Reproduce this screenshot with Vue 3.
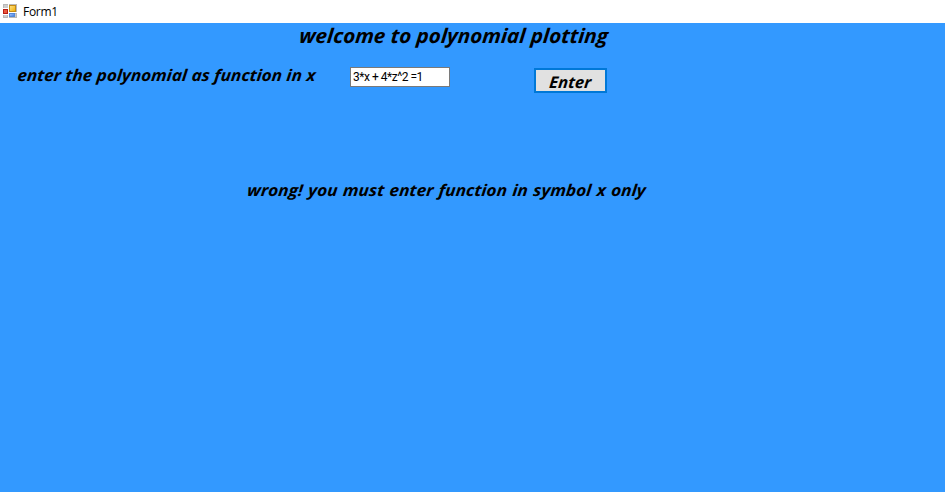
<script setup>
import { ref } from 'vue'

const expression = ref('3*x + 4*z^2 =1')
</script>

<template>
  <main class="window">
    <header class="titlebar">
      <svg class="app-icon" width="14" height="14" viewBox="0 0 14 14" aria-hidden="true">
        <defs>
          <linearGradient id="gold" x2="1" y2="1"><stop stop-color="#ffe58c" /><stop offset="1" stop-color="#f0ad00" /></linearGradient>
          <linearGradient id="blue" x2="1" y2="1"><stop stop-color="#a9ccff" /><stop offset="1" stop-color="#3c75dc" /></linearGradient>
        </defs>
        <path d="M0 0h14v14H0z" fill="#b8b8b8" />
        <path d="M1 1h4v3H1zM1 11h3v2H1zM12 10h1v3h-1z" fill="#cccccc" />
        <path d="M5 0h1v14H5zM0 4h5v1H0zM0 10h5v1H0zM5 8h9v1H5z" fill="#fff" />
        <rect x="6.5" y="1.5" width="6" height="6" fill="url(#gold)" stroke="#c58b13" />
        <rect x="0.5" y="5.5" width="4" height="4" fill="#e9573d" stroke="#b91c13" />
        <rect x="6.5" y="9.5" width="5" height="3" fill="url(#blue)" stroke="#5288d8" />
      </svg>
      <span class="caption">Form1</span>
    </header>
    <section class="form">
      <h1 class="welcome">welcome to polynomial plotting</h1>
      <div class="entry">
        <label class="prompt" for="polynomial"><span class="prompt-text">enter the polynomial as function in x</span></label>
        <input id="polynomial" v-model="expression" class="field" type="text" spellcheck="false" />
        <button class="enter" type="button"><span class="enter-text">Enter</span></button>
      </div>
      <p class="message">wrong! you must enter function in symbol x only</p>
    </section>
  </main>
</template>

<style>
body { margin: 0; overflow: hidden; }
</style>

<style scoped>
.window {
  display: flex;
  flex-direction: column;
  width: 945px;
  height: 492px;
  background: #3399ff;
  color: #000;
  font-family: "Open Sans", "Noto Sans", sans-serif;
}
.titlebar {
  display: flex;
  box-sizing: border-box;
  height: 23px;
  padding: 4px 0 0 3px;
  background: #fff;
}
.app-icon { flex: none; }
.caption {
  margin-left: 6px;
  font-size: 12px;
  line-height: 16px;
  letter-spacing: -0.3px;
}
.form {
  display: flex;
  flex-direction: column;
  align-items: flex-start;
}
.welcome, .prompt, .message, .enter {
  font-weight: 700;
  font-style: italic;
  white-space: nowrap;
}
.welcome {
  margin: 0 0 0 299px;
  font-size: 20px;
  line-height: 26px;
  transform: scaleX(1.031) skewX(-5deg);
  transform-origin: 0 70%;
}
.entry {
  display: flex;
  align-items: flex-start;
  height: 43px;
  padding: 18px 0 0 17px;
}
.prompt {
  width: 333px;
  font-size: 16px;
  line-height: 17px;
}
.prompt-text {
  display: inline-block;
  transform: scaleX(1.07) skewX(-5deg);
  transform-origin: 0 75%;
}
.field {
  box-sizing: border-box;
  width: 100px;
  height: 20px;
  padding: 0 0 1px 2px;
  border: 1px solid #7a7a7a;
  border-radius: 0;
  background: #fff;
  color: #000;
  font: 12px/17px Roboto, "Open Sans", sans-serif;
  letter-spacing: -0.48px;
  outline: none;
}
.enter {
  box-sizing: border-box;
  width: 73px;
  height: 25px;
  margin: 1px 0 0 84px;
  padding: 2px 0 0;
  border: 2px solid #0078d7;
  border-radius: 0;
  background: #e1e1e1;
  color: #000;
  font-family: inherit;
  font-size: 16px;
  line-height: 20px;
}
.enter-text {
  display: inline-block;
  transform: scaleX(1.03) skewX(-5deg);
}
.message {
  margin: 69px 0 0 247px;
  font-size: 16px;
  line-height: 22px;
  word-spacing: 0.8px;
  transform: scaleX(1.077) skewX(-5deg);
  transform-origin: 0 70%;
}
</style>
